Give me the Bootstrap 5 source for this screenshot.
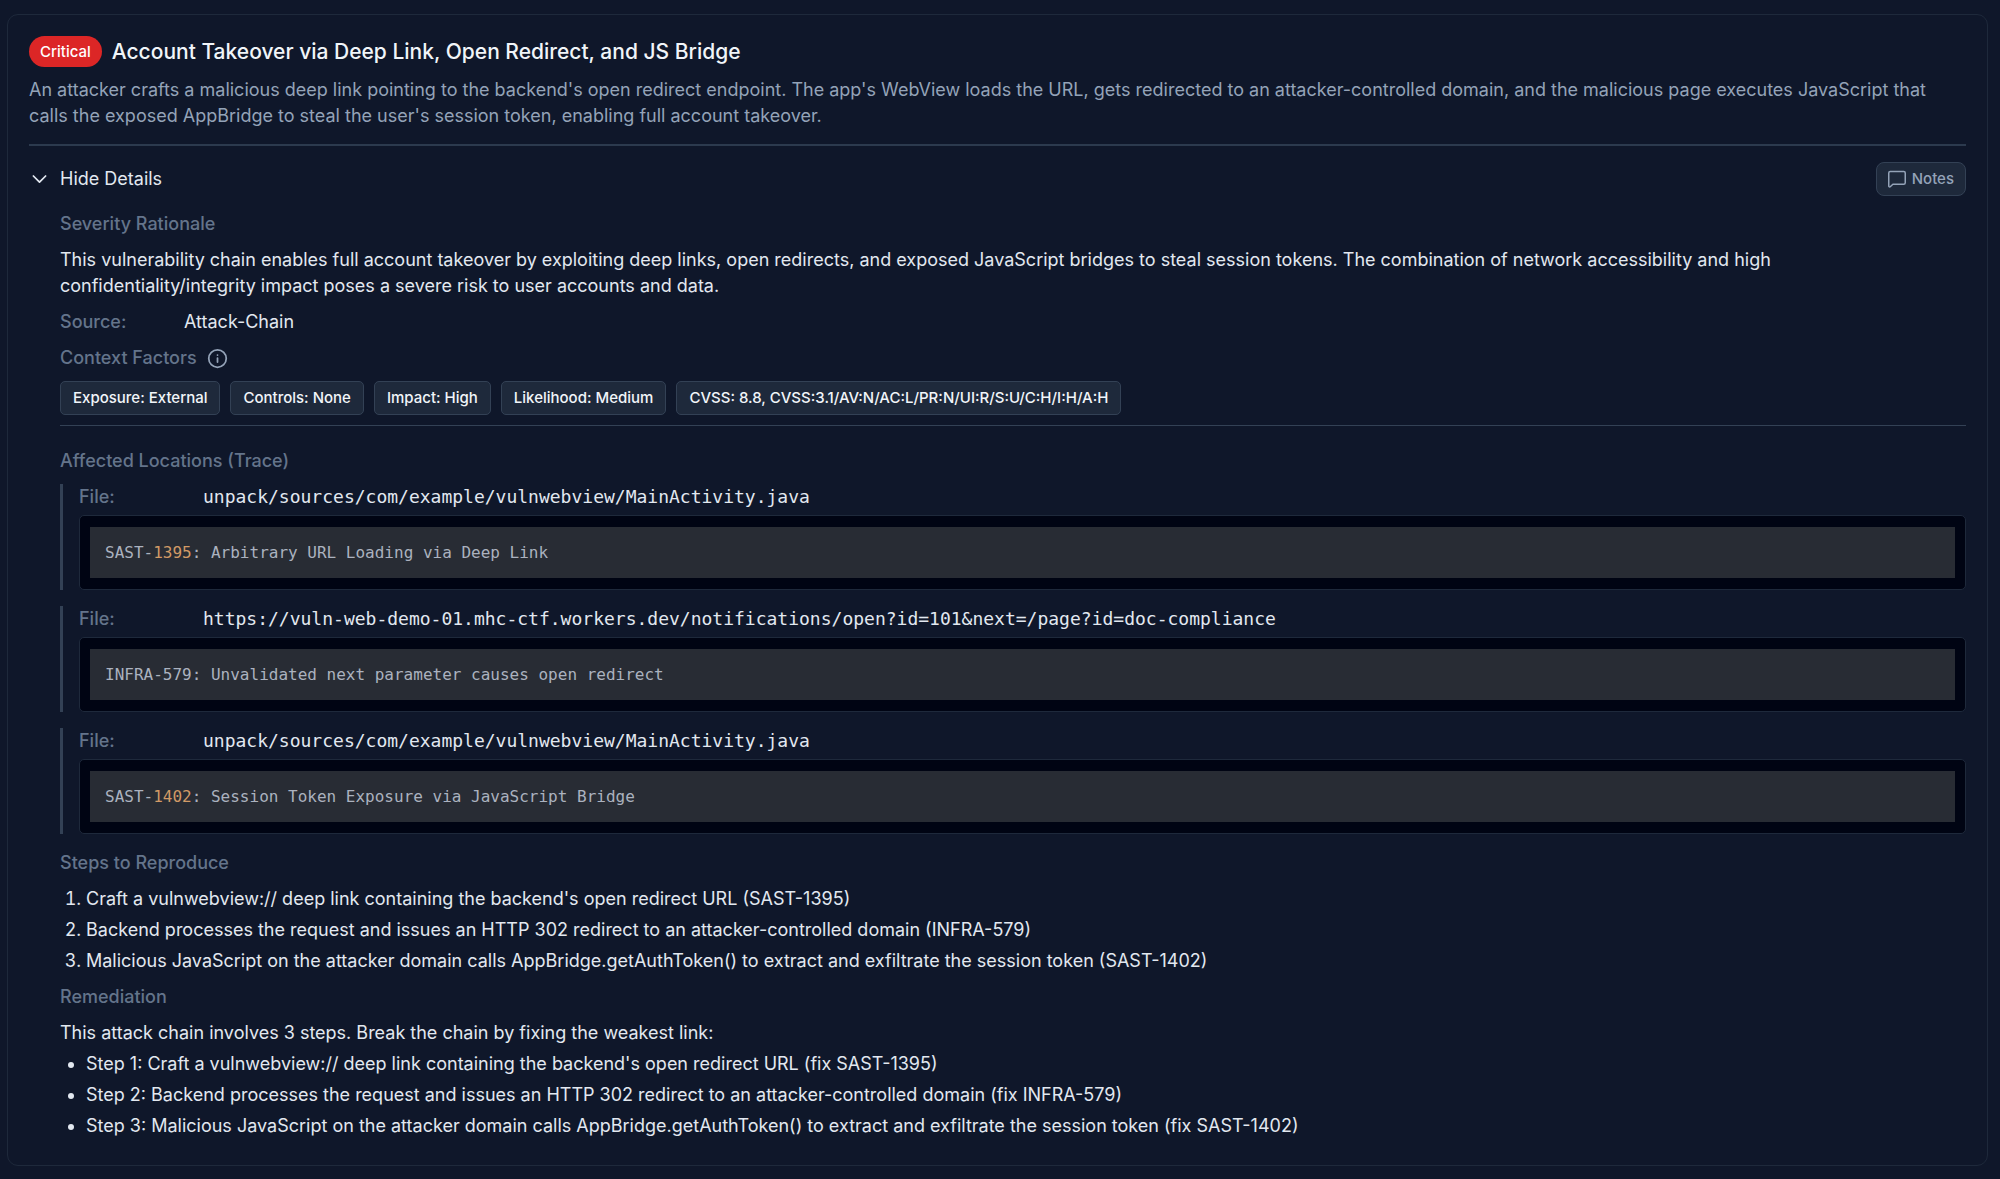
<!DOCTYPE html>
<html lang="en" data-bs-theme="dark">
<head>
<meta charset="utf-8">
<meta name="viewport" content="width=device-width, initial-scale=1">
<title>Account Takeover via Deep Link, Open Redirect, and JS Bridge</title>
<link href="https://cdn.jsdelivr.net/npm/bootstrap@5.3.0/dist/css/bootstrap.min.css" rel="stylesheet">
<style>
  body {
    background: #0f172a;
    color: #e2e8f0;
    font-family: Inter, "Liberation Sans", sans-serif;
    font-size: 18px;
    line-height: 26px;
    padding: 14px 12px 12px 7px;
  }
  .finding { background: #0f172a; border: 1px solid #1e293b; border-radius: 11px; padding: 21px; }
  .finding-head { margin-bottom: 10px; }
  .severity { background: #dc2626; color: #fff; font-size: 15px; font-weight: 500; line-height: 21px; padding: 5px 11px; }
  .finding-title { font-size: 21px; font-weight: 500; line-height: 31px; color: #f1f5f9; }
  .summary { color: #94a3b8; margin-bottom: 15px; }
  .rule { border-top: 2px solid #2c3a4e; }
  .rule-thin { border-top: 1px solid #334155; margin-bottom: 12px; }
  .gap-m { gap: 10px; }
  .gap-s { gap: 5px; }
  .toggle-row { margin-bottom: 15px; }
  .toggle-btn { background: none; border: 0; padding: 0; color: #e2e8f0; }
  .notes-btn {
    background: #1e293b; border: 1px solid #334155; border-radius: 8px; color: #94a3b8;
    font-size: 15px; font-weight: 500; line-height: 22px; padding: 5px 11px; gap: 6px;
  }
  .details { padding-left: 31px; }
  .label { color: #64748b; font-size: 18px; font-weight: 500; line-height: 26px; }
  .key { color: #64748b; font-weight: 500; width: 124px; flex: none; }
  .factor {
    background: #1e293b; border: 1px solid #334155; border-radius: 5px; color: #f1f5f9;
    font-size: 15px; font-weight: 500; line-height: 22px; padding: 5px 12px;
  }
  .info-btn { background: none; border: 0; padding: 0; color: #94a3b8; }
  .trace { border-left: 3px solid #334155; padding-left: 16px; margin-bottom: 6px; }
  .path, .code { font-family: "DejaVu Sans Mono", "Liberation Mono", monospace; }
  .codebox { background: #000413; border: 1px solid #1e293b; border-radius: 5px; padding: 11px 10px; }
  .code { background: #282c34; color: #abb2bf; font-size: 16px; line-height: 21px; padding: 15px; }
  .num { color: #d19a66; }
  .steps { padding-left: 26px; }
  .remedy { margin-bottom: 5px; }
  svg { display: block; fill: none; stroke: currentColor; stroke-width: 2; stroke-linecap: round; stroke-linejoin: round; }
</style>
<script src="https://cdn.jsdelivr.net/npm/bootstrap@5.3.0/dist/js/bootstrap.bundle.min.js"></script>
</head>
<body>
<main class="finding">
  <header class="finding-head d-flex align-items-center gap-m">
    <span class="severity rounded-pill">Critical</span>
    <h1 class="finding-title m-0">Account Takeover via Deep Link, Open Redirect, and JS Bridge</h1>
  </header>
  <p class="summary">An attacker crafts a malicious deep link pointing to the backend's open redirect endpoint. The app's WebView loads the URL, gets redirected to an attacker-controlled domain, and the malicious page executes JavaScript that calls the exposed AppBridge to steal the user's session token, enabling full account takeover.</p>
  <div class="rule mb-3"></div>

  <div class="toggle-row d-flex justify-content-between align-items-center">
    <button type="button" class="toggle-btn d-flex align-items-center gap-m" data-bs-toggle="collapse" data-bs-target="#details" aria-expanded="true" aria-controls="details">
      <svg width="21" height="21" viewBox="0 0 24 24" aria-hidden="true"><path d="m5 8 7 7 7-7"/></svg>
      Hide Details
    </button>
    <button type="button" class="notes-btn d-flex align-items-center">
      <svg width="18" height="18" viewBox="0 0 24 24" aria-hidden="true"><path d="M23 17a2 2 0 0 1-2 2H6.500L3 22.300a1.200 1.200 0 0 1-2-.8V4a2 2 0 0 1 2-2h18a2 2 0 0 1 2 2z"/></svg>
      Notes
    </button>
  </div>

  <div class="collapse show" id="details">
    <div class="details d-flex flex-column gap-m">
      <h2 class="label m-0">Severity Rationale</h2>
      <p class="m-0">This vulnerability chain enables full account takeover by exploiting deep links, open redirects, and exposed JavaScript bridges to steal session tokens. The combination of network accessibility and high<br>confidentiality/integrity impact poses a severe risk to user accounts and data.</p>
      <div class="d-flex"><span class="key">Source:</span><span>Attack-Chain</span></div>
      <div class="d-flex align-items-center gap-m">
        <h2 class="label m-0">Context Factors</h2>
        <button type="button" class="info-btn" aria-label="About context factors">
          <svg width="21" height="21" viewBox="0 0 24 24" aria-hidden="true"><circle cx="12" cy="12" r="10"/><path d="M12 11.500v4.500M12 8h.01"/></svg>
        </button>
      </div>
      <div class="d-flex flex-wrap gap-m">
        <span class="factor">Exposure: External</span>
        <span class="factor">Controls: None</span>
        <span class="factor">Impact: High</span>
        <span class="factor">Likelihood: Medium</span>
        <span class="factor">CVSS: 8.8, CVSS:3.1/AV:N/AC:L/PR:N/UI:R/S:U/C:H/I:H/A:H</span>
      </div>
      <div class="rule-thin"></div>

      <h2 class="label m-0">Affected Locations (Trace)</h2>
      <section class="trace d-flex flex-column gap-s">
        <div class="d-flex"><span class="key">File:</span><span class="path">unpack/sources/com/example/vulnwebview/MainActivity.java</span></div>
        <div class="codebox"><pre class="code m-0">SAST-<span class="num">1395</span>: Arbitrary URL Loading via Deep Link</pre></div>
      </section>
      <section class="trace d-flex flex-column gap-s">
        <div class="d-flex"><span class="key">File:</span><span class="path">https://vuln-web-demo-01.mhc-ctf.workers.dev/notifications/open?id=101&amp;next=/page?id=doc-compliance</span></div>
        <div class="codebox"><pre class="code m-0">INFRA-579: Unvalidated next parameter causes open redirect</pre></div>
      </section>
      <section class="trace d-flex flex-column gap-s">
        <div class="d-flex"><span class="key">File:</span><span class="path">unpack/sources/com/example/vulnwebview/MainActivity.java</span></div>
        <div class="codebox"><pre class="code m-0">SAST-<span class="num">1402</span>: Session Token Exposure via JavaScript Bridge</pre></div>
      </section>

      <h2 class="label m-0">Steps to Reproduce</h2>
      <ol class="steps d-flex flex-column gap-s m-0">
        <li>Craft a vulnwebview:// deep link containing the backend's open redirect URL (SAST-1395)</li>
        <li>Backend processes the request and issues an HTTP 302 redirect to an attacker-controlled domain (INFRA-579)</li>
        <li>Malicious JavaScript on the attacker domain calls AppBridge.getAuthToken() to extract and exfiltrate the session token (SAST-1402)</li>
      </ol>

      <h2 class="label m-0">Remediation</h2>
      <div class="remedy d-flex flex-column gap-s">
        <p class="m-0">This attack chain involves 3 steps. Break the chain by fixing the weakest link:</p>
        <ul class="steps d-flex flex-column gap-s m-0">
          <li>Step 1: Craft a vulnwebview:// deep link containing the backend's open redirect URL (fix SAST-1395)</li>
          <li>Step 2: Backend processes the request and issues an HTTP 302 redirect to an attacker-controlled domain (fix INFRA-579)</li>
          <li>Step 3: Malicious JavaScript on the attacker domain calls AppBridge.getAuthToken() to extract and exfiltrate the session token (fix SAST-1402)</li>
        </ul>
      </div>
    </div>
  </div>
</main>
</body>
</html>
